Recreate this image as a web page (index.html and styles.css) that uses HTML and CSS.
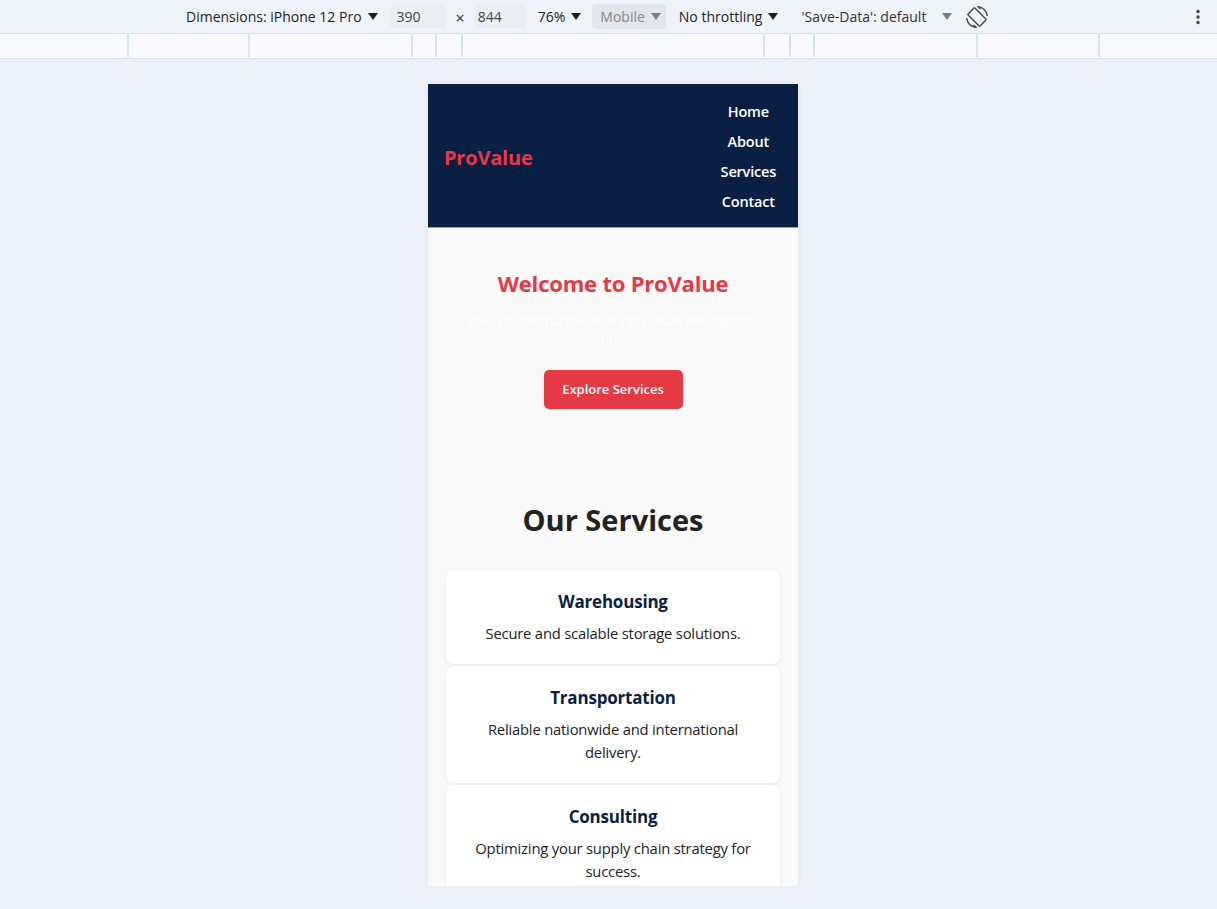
FILE: index.html
```html
<!DOCTYPE html>
<html lang="en">
<head>
<meta charset="utf-8">
<title>ProValue - Device Preview</title>
<link rel="stylesheet" href="styles.css">
</head>
<body>
<div class="toolbar">
  <span class="tb-item dims">Dimensions: iPhone 12 Pro <span class="caret"></span></span>
  <span class="tb-input w390">390</span>
  <span class="times">×</span>
  <span class="tb-input w844">844</span>
  <span class="tb-item zoom">76% <span class="caret"></span></span>
  <span class="tb-mobile">Mobile <span class="caret grey"></span></span>
  <span class="tb-item throttle">No throttling <span class="caret"></span></span>
  <span class="tb-item savedata">'Save-Data': default</span>
  <span class="caret grey sd-caret"></span>
  <svg class="rotate" width="22" height="22" viewBox="0 0 24 24" aria-hidden="true">
    <path fill="#474747" d="M16.48 2.52c3.27 1.55 5.61 4.72 5.970 8.48h1.5C23.44 4.84 18.29 0 12 0l-.66.03 3.81 3.81 1.33-1.32zm-6.25-.77c-.59-.59-1.54-.59-2.12 0L1.75 8.11c-.59.59-.59 1.54 0 2.12l12.02 12.02c.59.59 1.54.59 2.12 0l6.36-6.36c.59-.59.59-1.54 0-2.12L10.23 1.75zm4.6 19.44L2.81 9.17l6.36-6.36 12.02 12.02-6.36 6.36zm-7.31.29C4.25 19.94 1.91 16.76 1.55 13H.05C.56 19.16 5.71 24 12 24l.66-.03-3.81-3.81-1.33 1.32z"/>
  </svg>
  <span class="spacer"></span>
  <svg class="dots" width="6" height="16" viewBox="0 0 6 16" aria-hidden="true">
    <circle cx="3" cy="2.5" r="1.7" fill="#444"/>
    <circle cx="3" cy="8" r="1.7" fill="#444"/>
    <circle cx="3" cy="13.5" r="1.7" fill="#444"/>
  </svg>
</div>
<div class="ruler">
  <span class="seg s1"></span><span class="seg s2"></span><span class="seg s3"></span><span class="seg s4"></span><span class="seg s5"></span><span class="seg s6"></span><span class="seg s7"></span><span class="seg s8"></span><span class="seg s9"></span><span class="seg s10"></span><span class="seg last"></span>
</div>
<div class="stage">
  <div class="device">
    <header class="site-header">
      <div class="logo">ProValue</div>
      <nav>
        <ul class="nav">
          <li><a href="#">Home</a></li>
          <li><a href="#">About</a></li>
          <li><a href="#">Services</a></li>
          <li><a href="#">Contact</a></li>
        </ul>
      </nav>
    </header>
    <section class="hero">
      <h1>Welcome to ProValue</h1>
      <p>Your trusted partner in supply chain and logistics solutions.</p>
      <a class="btn" href="#">Explore Services</a>
    </section>
    <section class="services">
      <h2>Our Services</h2>
      <div class="cards">
        <div class="card">
          <h3>Warehousing</h3>
          <p>Secure and scalable storage solutions.</p>
        </div>
        <div class="card">
          <h3>Transportation</h3>
          <p>Reliable nationwide and international delivery.</p>
        </div>
        <div class="card">
          <h3>Consulting</h3>
          <p>Optimizing your supply chain strategy for success.</p>
        </div>
      </div>
    </section>
  </div>
</div>
</body>
</html>
```
FILE: styles.css
```css
* { box-sizing: border-box; }
html, body { margin: 0; padding: 0; }
body {
  width: 1217px;
  height: 909px;
  overflow: hidden;
  background: #edf1f9;
  font-family: "Open Sans", "Noto Sans", sans-serif;
}

/* DevTools toolbar */
.toolbar {
  height: 33px;
  display: flex;
  align-items: center;
  background: #eef2f9;
  color: #1f1f1f;
  font-size: 14px;
  padding-left: 186px;
  padding-right: 16px;
}
.tb-item { display: inline-flex; align-items: center; white-space: nowrap; }
.caret {
  display: inline-block;
  width: 0; height: 0;
  border-left: 5px solid transparent;
  border-right: 5px solid transparent;
  border-top: 7px solid #1f1f1f;
  margin-left: 6px;
}
.caret.grey { border-top-color: #7a7f86; }
.tb-input {
  display: inline-flex;
  align-items: center;
  height: 23px;
  background: #e9edf4;
  color: #474747;
  padding-left: 7px;
  border-radius: 3px;
}
.w390 { width: 56px; margin-left: 12px; }
.times { margin: 2px 9px 0 10px; font-size: 16px; color: #333; }
.w844 { width: 52px; padding-left: 4px; }
.zoom { margin-left: 12px; }
.tb-mobile {
  display: inline-flex;
  align-items: center;
  height: 25px;
  margin-left: 11px;
  padding: 0 5px 0 8px;
  background: #e1e5ec;
  color: #85898f;
  border-radius: 4px;
}
.throttle { margin-left: 13px; }
.savedata { margin-left: 23px; color: #333; }
.sd-caret { margin-left: 16px; }
.rotate { margin-left: 14px; }
.spacer { flex: 1; }

/* ruler */
.ruler {
  height: 26px;
  display: flex;
  background: #f8faff;
  border-top: 1px solid #d3e3fd;
  border-bottom: 1px solid #d3e3fd;
}
.seg { height: 23px; border-right: 2px solid #d3e3fd; flex: none; }
.s1 { width: 129px; }
.s2 { width: 121px; }
.s3 { width: 163px; }
.s4 { width: 24px; }
.s5 { width: 26px; }
.s6 { width: 302px; }
.s7 { width: 26px; }
.s8 { width: 24px; }
.s9 { width: 163px; }
.s10 { width: 122px; }
.seg.last { border-right: none; flex: 1; }

/* stage */
.stage {
  display: flex;
  justify-content: flex-start;
  padding-top: 25px;
  padding-left: 428px;
}
.device {
  width: 370px;
  height: 802px;
  overflow: hidden;
  background: #f9f9f9;
  box-shadow: 0 0 6px rgba(0, 0, 0, 0.06);
  color: #222;
}

/* site header */
.site-header {
  height: 144px;
  background: #0a1f44;
  display: flex;
  align-items: center;
  justify-content: space-between;
  padding: 0 22px 0 16px;
  border-bottom: 1px solid #9aa0ab;
}
.logo {
  color: #e63946;
  font-weight: 700;
  font-size: 20px;
  letter-spacing: -0.2px;
  margin-top: 3px;
}
.nav {
  list-style: none;
  margin: 2px 0 0;
  padding: 0;
  display: flex;
  flex-direction: column;
  align-items: center;
  gap: 9.3px;
}
.nav li { line-height: 21px; }
.nav a {
  color: #ffffff;
  text-decoration: none;
  font-weight: 600;
  font-size: 14.5px;
  letter-spacing: -0.2px;
}

/* hero */
.hero {
  text-align: center;
  padding: 39px 16px 0;
  height: 272px;
}
.hero h1 {
  margin: 0;
  color: #e63946;
  font-size: 22px;
  line-height: 32px;
  font-weight: 700;
  letter-spacing: -0.2px;
}
.hero p {
  margin: 11px 0 0;
  color: #ffffff;
  font-size: 12.8px;
  line-height: 20px;
}
.btn {
  display: inline-block;
  margin-top: 20px;
  width: 139px;
  height: 39px;
  line-height: 39px;
  background: #e63946;
  color: #ffffff;
  text-decoration: none;
  font-weight: 600;
  font-size: 13px;
  border-radius: 5px;
}

/* services */
.services {
  text-align: center;
  padding: 0 18px;
}
.services h2 {
  margin: 0 0 30px;
  font-size: 29px;
  line-height: 40px;
  font-weight: 700;
  color: #222;
}
.cards {
  display: flex;
  flex-direction: column;
  gap: 2px;
}
.card {
  background: #ffffff;
  border-radius: 8px;
  box-shadow: 0 1px 4px rgba(0, 0, 0, 0.07);
  padding: 20px 20px 19px;
}
.card h3 {
  margin: 0 0 8px;
  color: #0a1f44;
  font-size: 17px;
  line-height: 24px;
  font-weight: 700;
  letter-spacing: -0.2px;
}
.card p {
  margin: 0;
  font-size: 14.8px;
  line-height: 23px;
  color: #222;
  letter-spacing: -0.2px;
}
```
